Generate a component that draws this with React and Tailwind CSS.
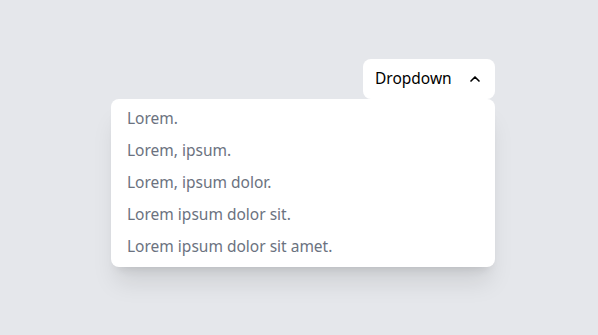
import { ChevronUp } from 'lucide-react';

const items = [
  'Lorem.',
  'Lorem, ipsum.',
  'Lorem, ipsum dolor.',
  'Lorem ipsum dolor sit.',
  'Lorem ipsum dolor sit amet.',
];

const App = () => {
  return (
    <div
      className="min-h-screen bg-[#e5e7eb] pt-[59px] pl-[111px]"
      style={{ fontFamily: '"Noto Sans", sans-serif' }}
    >
      {/* Dropdown */}
      <div className="relative w-96 flex justify-end">
        <button className="w-[132px] h-10 flex items-center justify-between px-3 bg-white rounded-lg text-[15.5px] text-black">
          <span>Dropdown</span>
          <ChevronUp size={16} strokeWidth={2.5} />
        </button>

        <ul className="absolute left-0 top-full w-96 py-1 bg-white rounded-lg shadow-xl">
          {items.map((item) => (
            <li key={item} className="px-4 h-8 flex items-center text-[15.5px] text-[#6b7280]">
              {item}
            </li>
          ))}
        </ul>
      </div>
    </div>
  );
};

export default App;
